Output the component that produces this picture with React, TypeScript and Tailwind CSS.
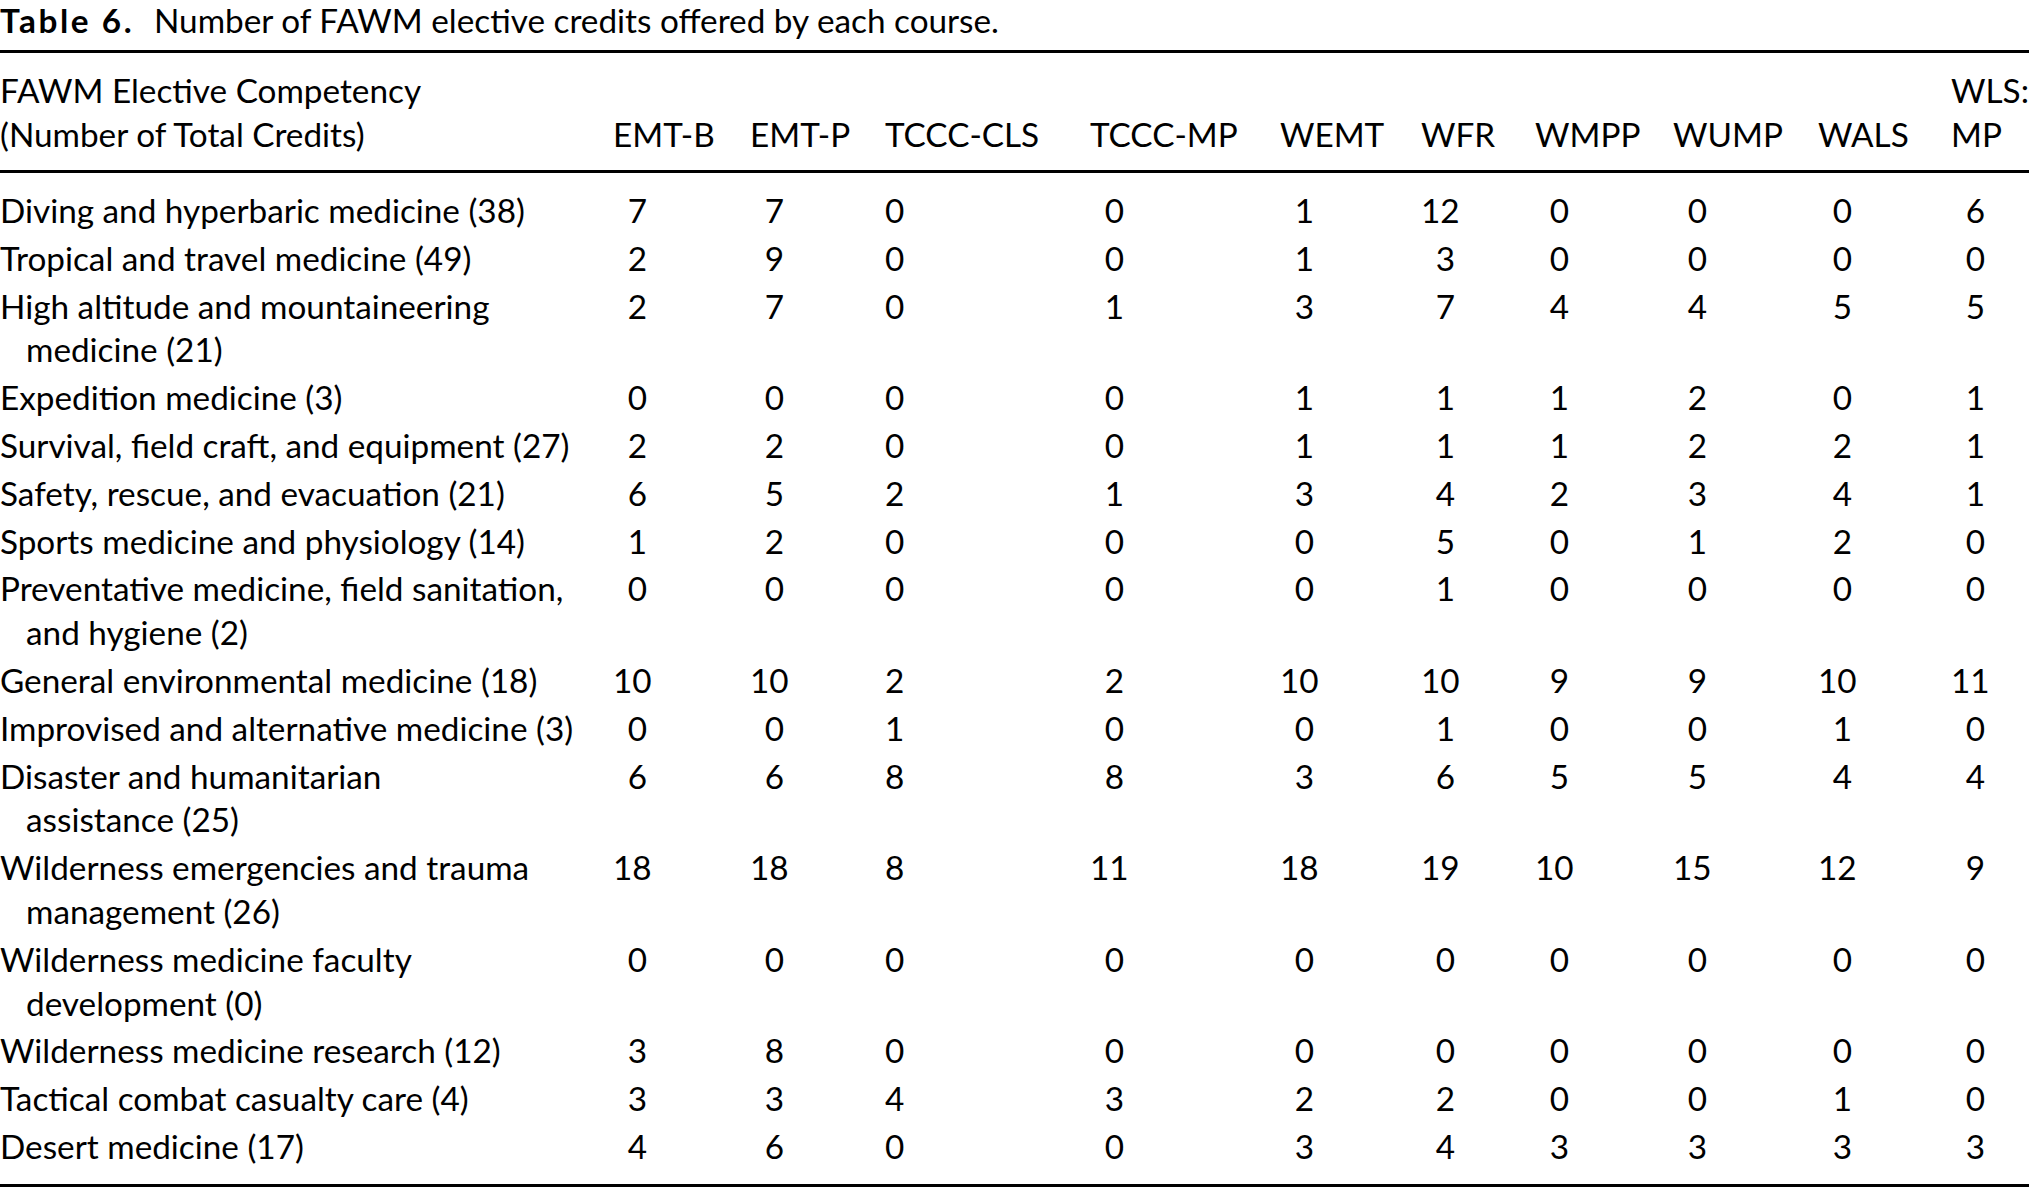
import React from "react";

type Row = {
  lines: string[];
  values: number[];
};

const columns = [
  "EMT-B",
  "EMT-P",
  "TCCC-CLS",
  "TCCC-MP",
  "WEMT",
  "WFR",
  "WMPP",
  "WUMP",
  "WALS",
];

const rows: Row[] = [
  { lines: ["Diving and hyperbaric medicine (38)"], values: [7, 7, 0, 0, 1, 12, 0, 0, 0, 6] },
  { lines: ["Tropical and travel medicine (49)"], values: [2, 9, 0, 0, 1, 3, 0, 0, 0, 0] },
  { lines: ["High altitude and mountaineering", "medicine (21)"], values: [2, 7, 0, 1, 3, 7, 4, 4, 5, 5] },
  { lines: ["Expedition medicine (3)"], values: [0, 0, 0, 0, 1, 1, 1, 2, 0, 1] },
  { lines: ["Survival, field craft, and equipment (27)"], values: [2, 2, 0, 0, 1, 1, 1, 2, 2, 1] },
  { lines: ["Safety, rescue, and evacuation (21)"], values: [6, 5, 2, 1, 3, 4, 2, 3, 4, 1] },
  { lines: ["Sports medicine and physiology (14)"], values: [1, 2, 0, 0, 0, 5, 0, 1, 2, 0] },
  { lines: ["Preventative medicine, field sanitation,", "and hygiene (2)"], values: [0, 0, 0, 0, 0, 1, 0, 0, 0, 0] },
  { lines: ["General environmental medicine (18)"], values: [10, 10, 2, 2, 10, 10, 9, 9, 10, 11] },
  { lines: ["Improvised and alternative medicine (3)"], values: [0, 0, 1, 0, 0, 1, 0, 0, 1, 0] },
  { lines: ["Disaster and humanitarian", "assistance (25)"], values: [6, 6, 8, 8, 3, 6, 5, 5, 4, 4] },
  { lines: ["Wilderness emergencies and trauma", "management (26)"], values: [18, 18, 8, 11, 18, 19, 10, 15, 12, 9] },
  { lines: ["Wilderness medicine faculty", "development (0)"], values: [0, 0, 0, 0, 0, 0, 0, 0, 0, 0] },
  { lines: ["Wilderness medicine research (12)"], values: [3, 8, 0, 0, 0, 0, 0, 0, 0, 0] },
  { lines: ["Tactical combat casualty care (4)"], values: [3, 3, 4, 3, 2, 2, 0, 0, 1, 0] },
  { lines: ["Desert medicine (17)"], values: [4, 6, 0, 0, 3, 4, 3, 3, 3, 3] },
];

const gridCols =
  "grid grid-cols-[613px_137px_135px_205px_190px_141px_114px_138px_145px_133px_78px]";

function Cell({ value, col }: { value: number; col: number }) {
  // TCCC-CLS only has single digits, so its figures sit flush left
  return (
    <div className="py-[2px]">
      <span
        className={
          col === 2
            ? "inline-block w-[17px] text-right tabular-nums"
            : "inline-block w-[34px] text-right tabular-nums"
        }
      >
        {value}
      </span>
    </div>
  );
}

export default function App() {
  return (
    <div className="w-[2029px] h-[1188px] overflow-hidden bg-white text-black font-['Lato','Open_Sans',sans-serif] text-[33.3px]">
      <div className="h-[40px] leading-[40px] whitespace-nowrap">
        <span className="inline-block w-[154px] font-bold tracking-[2.6px]">Table 6.</span>
        <span>Number of FAWM elective credits offered by each course.</span>
      </div>

      <div className="mt-[10px] h-[3px] bg-black" />

      <div className={`${gridCols} pt-[15px] pb-[14px] leading-[44px] whitespace-nowrap`}>
        <div>
          <div>FAWM Elective Competency</div>
          <div>(Number of Total Credits)</div>
        </div>
        {columns.map((c) => (
          <div key={c} className="flex items-end">
            {c}
          </div>
        ))}
        <div>
          <div>WLS:</div>
          <div>MP</div>
        </div>
      </div>

      <div className="h-[3px] bg-black" />

      <div className="pt-[14px] pb-[13px] leading-[43.8px] whitespace-nowrap">
        {rows.map((r) => (
          <div key={r.lines[0]} className={gridCols}>
            <div className="py-[2px]">
              <div>{r.lines[0]}</div>
              {r.lines[1] && <div className="pl-[26px]">{r.lines[1]}</div>}
            </div>
            {r.values.map((v, i) => (
              <Cell key={i} value={v} col={i} />
            ))}
          </div>
        ))}
      </div>

      <div className="h-[3px] bg-black" />
    </div>
  );
}
